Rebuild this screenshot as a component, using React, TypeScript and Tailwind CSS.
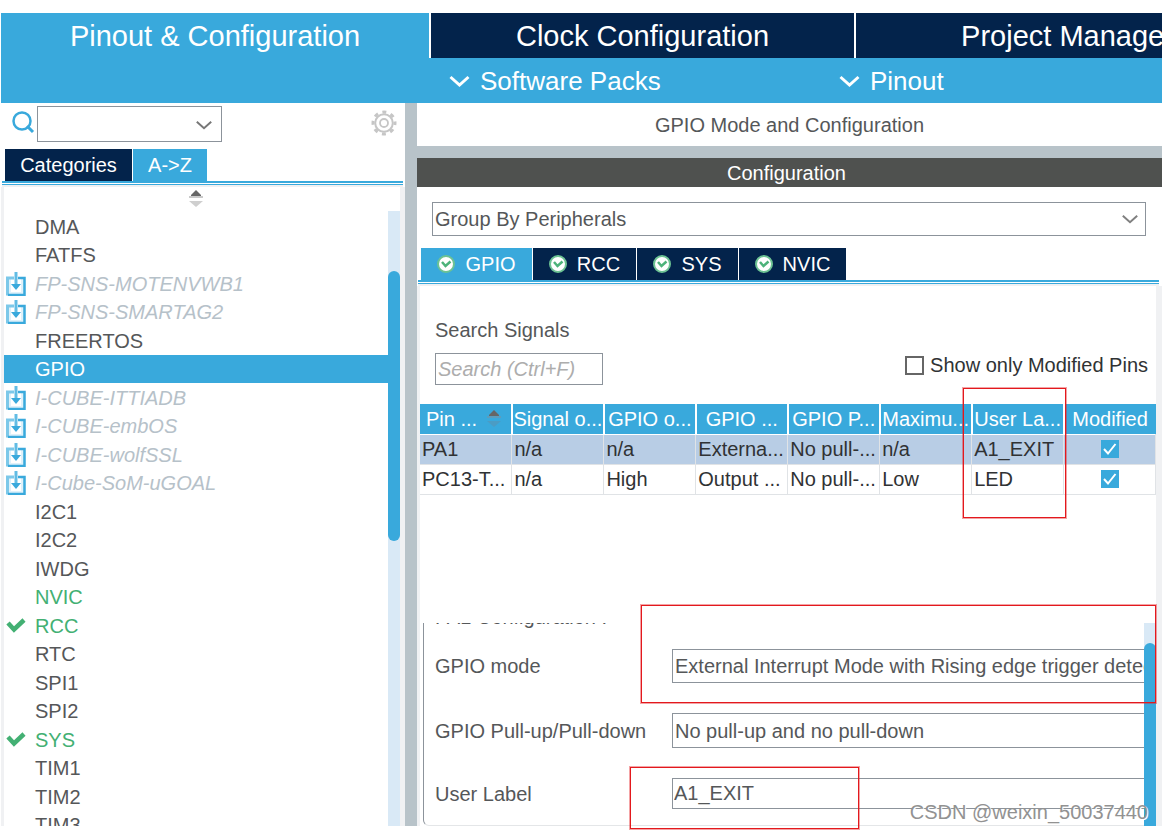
import { useState } from "react";

type Status = "none" | "pack" | "selected" | "enabled" | "configured";

interface Peripheral {
  name: string;
  status: Status;
}

const peripherals: Peripheral[] = [
  { name: "DMA", status: "none" },
  { name: "FATFS", status: "none" },
  { name: "FP-SNS-MOTENVWB1", status: "pack" },
  { name: "FP-SNS-SMARTAG2", status: "pack" },
  { name: "FREERTOS", status: "none" },
  { name: "GPIO", status: "selected" },
  { name: "I-CUBE-ITTIADB", status: "pack" },
  { name: "I-CUBE-embOS", status: "pack" },
  { name: "I-CUBE-wolfSSL", status: "pack" },
  { name: "I-Cube-SoM-uGOAL", status: "pack" },
  { name: "I2C1", status: "none" },
  { name: "I2C2", status: "none" },
  { name: "IWDG", status: "none" },
  { name: "NVIC", status: "enabled" },
  { name: "RCC", status: "configured" },
  { name: "RTC", status: "none" },
  { name: "SPI1", status: "none" },
  { name: "SPI2", status: "none" },
  { name: "SYS", status: "configured" },
  { name: "TIM1", status: "none" },
  { name: "TIM2", status: "none" },
  { name: "TIM3", status: "none" },
];

const statusColors: Record<Status, string> = {
  none: "text-[#555759]",
  pack: "text-[#b6c1c9] italic",
  selected: "text-white bg-[#39a9dc]",
  enabled: "text-[#43b073]",
  configured: "text-[#43b073]",
};

const columns = ["Pin ...", "Signal o...", "GPIO o...", "GPIO ...", "GPIO P...", "Maximu...", "User La...", "Modified"];

const pins = [
  { cells: ["PA1", "n/a", "n/a", "Externa...", "No pull-...", "n/a", "A1_EXIT"], selected: true },
  { cells: ["PC13-T...", "n/a", "High", "Output ...", "No pull-...", "Low", "LED"], selected: false },
];

const configTabs = [
  { name: "GPIO", width: "w-[111px]" },
  { name: "RCC", width: "w-[103px]" },
  { name: "SYS", width: "w-[101px]" },
  { name: "NVIC", width: "w-[107px]" },
];

function Chevron({ className }: { className: string }) {
  return (
    <svg viewBox="0 0 20 12" fill="none" stroke="currentColor" className={className} aria-hidden="true">
      <path d="M1 2 L10 10 L19 2" vectorEffect="non-scaling-stroke" />
    </svg>
  );
}

function GearIcon() {
  return (
    <svg viewBox="0 0 26 26" fill="none" stroke="#c6c6c6" className="w-[26px] h-[26px]" aria-hidden="true">
      <circle cx="13" cy="13" r="8.8" strokeWidth="2" />
      {/* eight teeth, one every 45 degrees */}
      <circle cx="13" cy="13" r="11" strokeWidth="3" strokeDasharray="4 4.639" strokeDashoffset="2" />
      <circle cx="13" cy="13" r="4" strokeWidth="1.8" />
    </svg>
  );
}

function SortIcon({ light }: { light?: boolean }) {
  return (
    <svg viewBox="0 0 14 17" className="w-3.5 h-[17px] shrink-0" aria-hidden="true">
      <path d="M7 0 L12 5 V6 H2 V5 Z" fill="#666" />
      <path d="M0 6 H14 V8 H0 Z" fill={light ? "#5b9dbd" : "#c9c9c9"} />
      <path d="M0 11 H14 L7 17 Z" fill={light ? "#4b9cc4" : "#cfcfcf"} />
    </svg>
  );
}

function PackIcon() {
  return (
    <svg viewBox="0 0 20 24" fill="none" className="w-5 h-6" aria-hidden="true">
      <path d="M1 5 H5 V20 H15 V5 H19 V24 H1 Z" fill="#dff1fa" />
      <path d="M8 6 H1.500 V22 H3" stroke="#7cc8e9" strokeWidth="3" />
      <path d="M12 6 H18.500 V23 H2" stroke="#39a9dc" strokeWidth="2.500" />
      <path d="M10 0 V14" stroke="#62bce4" strokeWidth="3" />
      <path d="M5 12 H15 L10 18 Z" fill="#39a9dc" />
    </svg>
  );
}

function CheckIcon() {
  return (
    <svg viewBox="0 0 20 16" fill="none" className="w-5 h-4" aria-hidden="true">
      <path d="M2 5 L8 11.500 L18 2" stroke="#43b073" strokeWidth="4.500" />
    </svg>
  );
}

function CircleCheck() {
  return (
    <svg viewBox="0 0 18 18" fill="none" className="w-[18px] h-[18px] shrink-0" aria-hidden="true">
      <circle cx="9" cy="9" r="8" fill="#fff" stroke="#6cc293" strokeWidth="2" />
      <path d="M5 7 L8.500 11 L13.500 6.500" stroke="#4db37a" strokeWidth="2.500" />
    </svg>
  );
}

function TabRule() {
  return (
    <div>
      <div className="h-0.5 bg-[#39a9dc]" />
      <div className="h-px bg-white" />
      <div className="h-px bg-[#39a9dc]" />
      <div className="h-0.5 bg-[#f0f1f3]" />
    </div>
  );
}

function Sidebar() {
  const [selected, setSelected] = useState("GPIO");

  return (
    <aside className="w-[404px] shrink-0 flex flex-col">
      <div className="h-[46px] shrink-0 flex items-start pt-[3px] pl-2.5 pr-2">
        <svg viewBox="0 0 24 24" fill="none" stroke="#39a9dc" className="w-6 h-6 mt-1" aria-hidden="true">
          <circle cx="11" cy="11" r="8.500" strokeWidth="2.500" />
          <path d="M16 16 L22 22" strokeWidth="3" />
        </svg>
        <div className="relative ml-0.5">
          <select
            aria-label="Search peripherals"
            className="block w-[185px] h-9 appearance-none border border-[#8c939b] bg-white px-1"
          />
          <Chevron className="absolute right-2.5 top-3.5 w-4 h-2.5 text-[#777] stroke-2 pointer-events-none" />
        </div>
        <button aria-label="Settings" className="ml-auto mt-1">
          <GearIcon />
        </button>
      </div>

      <div className="flex gap-px pl-1 h-8 shrink-0 text-white">
        <button className="w-[127px] bg-[#03234b]">Categories</button>
        <button className="w-[74px] bg-[#39a9dc]">A-&gt;Z</button>
      </div>
      <div className="ml-px mr-0.5">
        <TabRule />
      </div>

      <div className="flex-1 min-h-0 flex flex-col border-l-3 border-r-5 border-[#f0f1f3]">
        <div className="h-6 shrink-0 flex justify-center pt-[3px] pr-3">
          <SortIcon />
        </div>
        <div className="flex-1 min-h-0 flex">
          <ul className="flex-1 min-w-0 pt-px overflow-hidden">
            {peripherals.map((p) => (
              <li key={p.name} className="h-[29px] even:h-7">
                <button
                  onClick={() => setSelected(p.name)}
                  aria-current={selected === p.name}
                  className={`w-full h-full flex items-center pl-0.5 text-left ${statusColors[p.status]}`}
                >
                  <span className="w-[29px] shrink-0">
                    {p.status === "pack" && <PackIcon />}
                    {p.status === "configured" && <CheckIcon />}
                  </span>
                  {p.name}
                </button>
              </li>
            ))}
          </ul>
          <div className="w-3 bg-[#d9e9f6] pt-[60px]">
            <div className="h-[270px] rounded-full bg-[#39a9dc]" />
          </div>
        </div>
      </div>
    </aside>
  );
}

function PinTable() {
  return (
    <div className="relative">
      <table className="w-full table-fixed border-collapse leading-7">
        <thead>
          <tr className="bg-[#39a9dc] text-white border-b border-white">
            {columns.map((c, i) => (
              <th
                key={c}
                className="h-[30px] p-0 font-normal whitespace-nowrap overflow-hidden border-r-2 border-white last:border-r-0"
              >
                {i === 0 ? (
                  <span className="flex items-center justify-between pl-1.5 pr-2.5">
                    {c}
                    <SortIcon light />
                  </span>
                ) : (
                  c
                )}
              </th>
            ))}
          </tr>
        </thead>
        <tbody className="text-[#303234]">
          {pins.map((pin) => (
            <tr key={pin.cells[0]} className={`border-b border-[#e0e3e6] ${pin.selected ? "bg-[#b8cde5]" : "bg-white"}`}>
              {pin.cells.map((cell, i) => (
                <td
                  key={i}
                  className="h-[30px] py-0 pl-0.5 pr-0 whitespace-nowrap overflow-hidden border-r border-[#e0e3e6]"
                >
                  {cell}
                </td>
              ))}
              <td className="p-0 border-r border-[#e0e3e6]">
                <label className="relative block w-[18px] h-[18px] mx-auto">
                  <input
                    type="checkbox"
                    defaultChecked
                    aria-label={`${pin.cells[0]} modified`}
                    className="block w-full h-full appearance-none bg-[#39a9dc]"
                  />
                  <svg viewBox="0 0 18 18" fill="none" className="absolute inset-0 pointer-events-none" aria-hidden="true">
                    <path d="M3 9 L7 13.500 L14.500 4" stroke="#fff" strokeWidth="2" />
                  </svg>
                </label>
              </td>
            </tr>
          ))}
        </tbody>
      </table>
      {/* marks the User Label column */}
      <Highlight className="-top-4 right-[90px] w-[103px] h-[130px]" />
    </div>
  );
}

function Highlight({ className }: { className: string }) {
  return <div className={`absolute border border-[#e3191d] ring-1 ring-[#e3191d]/40 pointer-events-none ${className}`} />;
}

function PinConfiguration() {
  const field = "min-w-0 flex-1 appearance-none border border-r-0 border-[#8c939b] bg-white rounded-none";

  return (
    <section className="relative flex-1 min-h-0 flex pl-[3px]">
      <div className="flex-1 min-w-0 overflow-hidden border-l border-b border-l-[#8c939b] border-b-[#e4e6e8] rounded-bl-md pl-[11px]">
        <h3 className="-mt-5 leading-7">PA1 Configuration :</h3>
        <div className="flex items-center mt-[18px]">
          <label htmlFor="mode" className="w-[237px] shrink-0">GPIO mode</label>
          <select id="mode" className={`${field} h-[34px] pl-0.5`}>
            <option>External Interrupt Mode with Rising edge trigger detection</option>
          </select>
        </div>
        <div className="flex items-center mt-[30px]">
          <label htmlFor="pull" className="w-[237px] shrink-0">GPIO Pull-up/Pull-down</label>
          <select id="pull" className={`${field} h-[35px] pl-0.5`}>
            <option>No pull-up and no pull-down</option>
          </select>
        </div>
        <div className="flex items-center mt-[30px]">
          <label htmlFor="label" className="w-[237px] shrink-0">User Label</label>
          <input id="label" defaultValue="A1_EXIT" className={`${field} h-[31px] pl-px`} />
        </div>
      </div>
      <div className="w-3 bg-[#d9e9f6] pt-5">
        <div className="h-full rounded-t-full bg-[#39a9dc]" />
      </div>
      <Highlight className="-top-[18px] left-[221px] right-0 h-[98px]" />
      <Highlight className="top-36 left-[210px] w-[229px] h-[62px]" />
      <p className="absolute right-2 bottom-0 leading-7 text-[#929292] whitespace-nowrap [text-shadow:1px_1px_0_#fff]">
        CSDN @weixin_50037440
      </p>
    </section>
  );
}

function GpioPanel() {
  const [active, setActive] = useState("GPIO");

  return (
    <main className="flex-1 min-w-0 flex flex-col">
      <h1 className="h-[43px] shrink-0 flex items-center justify-center">GPIO Mode and Configuration</h1>
      <div className="h-3 shrink-0 bg-[#b8c3c9]" />
      <h2 className="h-[29px] shrink-0 flex items-center justify-center pr-1.5 bg-[#4f514f] text-white">
        Configuration
      </h2>

      <div className="relative mt-[15px] ml-[15px] mr-4">
        <select
          aria-label="Group by"
          className="block w-full h-[34px] appearance-none border border-[#8c939b] bg-white pl-0.5"
        >
          <option>Group By Peripherals</option>
        </select>
        <Chevron className="absolute right-2 top-3 w-4 h-2.5 text-[#808080] stroke-2 pointer-events-none" />
      </div>

      <div className="mt-3 flex gap-px pl-1 h-8 shrink-0 text-white">
        {configTabs.map((t) => (
          <button
            key={t.name}
            onClick={() => setActive(t.name)}
            className={`flex items-center justify-center gap-2.5 ${t.width} ${
              active === t.name ? "bg-[#39a9dc]" : "bg-[#03234b]"
            }`}
          >
            <CircleCheck />
            {t.name}
          </button>
        ))}
      </div>
      <div className="ml-px mr-[3px]">
        <TabRule />
      </div>

      <div className="flex-1 min-h-0 flex flex-col border-l-3 border-r-6 border-[#f0f1f3]">
        <div className="h-[337px] shrink-0">
          <div className="flex items-end justify-between pt-[30px] pl-[15px] pr-2">
            <div>
              <label htmlFor="signals" className="block leading-7">Search Signals</label>
              <input
                id="signals"
                placeholder="Search (Ctrl+F)"
                className="block mt-[9px] w-[168px] h-8 border border-[#8c939b] px-0.5 placeholder:italic placeholder:text-[#adadad]"
              />
            </div>
            <label className="flex items-center gap-1.5 mb-1.5 leading-7 text-[#303234]">
              <input type="checkbox" className="appearance-none w-[19px] h-[19px] border-2 border-[#666] bg-white" />
              Show only Modified Pins
            </label>
          </div>
          <div className="mt-[19px]">
            <PinTable />
          </div>
        </div>
        <PinConfiguration />
      </div>
    </main>
  );
}

export default function App() {
  return (
    <div className="h-screen flex flex-col overflow-hidden bg-white pt-[13px] pb-1 pl-px font-['Liberation_Sans',Arial,sans-serif] text-[20px] leading-7 text-[#555759]">
      <nav className="flex gap-0.5 h-[45px] shrink-0 overflow-hidden text-[29px] text-white">
        <button className="w-[428px] shrink-0 bg-[#39a9dc]">Pinout &amp; Configuration</button>
        <button className="w-[423px] shrink-0 bg-[#03234b]">Clock Configuration</button>
        <button className="w-[423px] shrink-0 bg-[#03234b]">Project Manager</button>
      </nav>
      <div className="h-[45px] shrink-0 flex items-center pl-[448px] bg-[#39a9dc] text-[26px] text-white">
        <button className="w-[390px] flex items-center gap-2.5">
          <Chevron className="w-[21px] h-3 stroke-3" />
          Software Packs
        </button>
        <button className="flex items-center gap-2.5">
          <Chevron className="w-[21px] h-3 stroke-3" />
          Pinout
        </button>
      </div>
      <div className="flex-1 min-h-0 flex">
        <Sidebar />
        <div className="w-3 shrink-0 bg-[#b8c3c9]" />
        <GpioPanel />
      </div>
    </div>
  );
}
